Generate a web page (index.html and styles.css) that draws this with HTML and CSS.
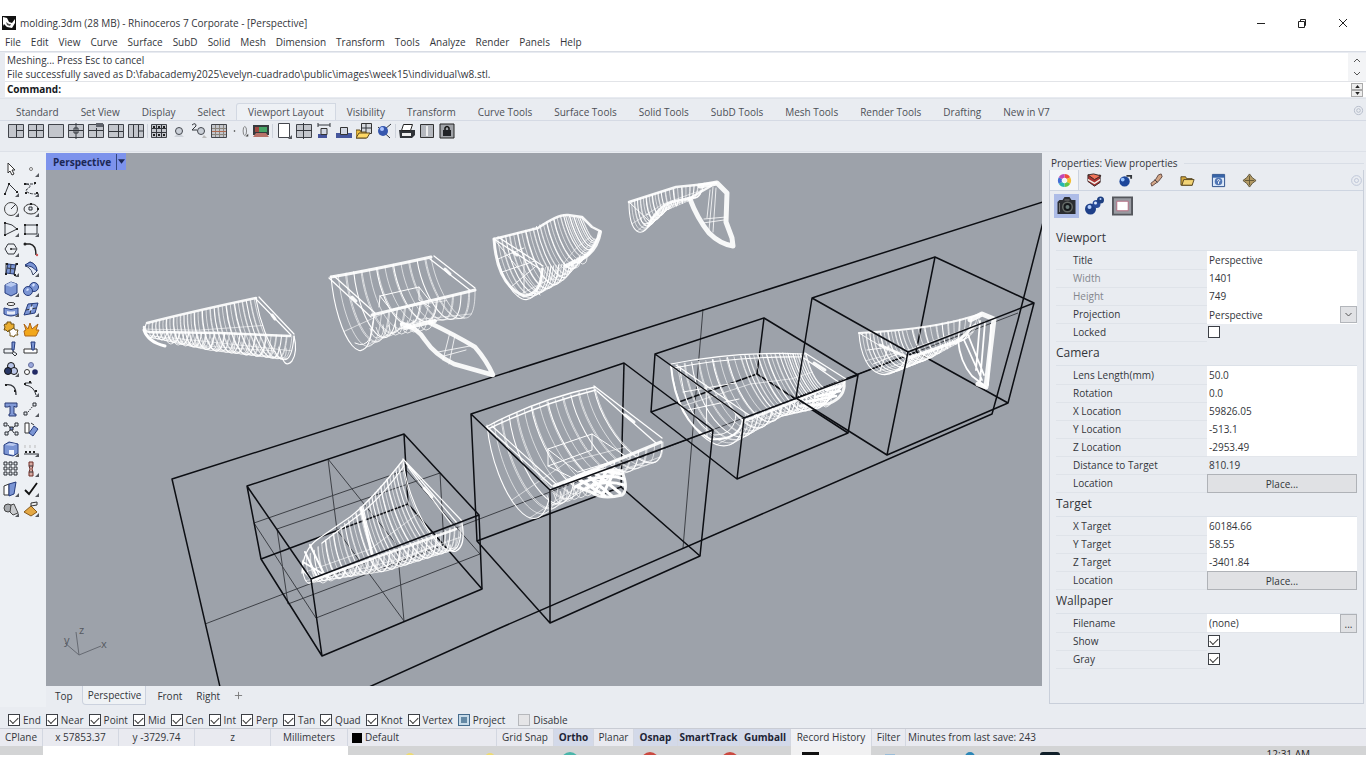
FILE: index.html
```html
<!DOCTYPE html>
<html lang="en">
<head>
<meta charset="utf-8">
<title>molding.3dm - Rhinoceros 7 Corporate</title>
<link rel="stylesheet" href="styles.css">
</head>
<body>
<header class="titlebar">
  <svg class="app-icon" viewBox="0 0 14 14"><path d="M0 0h14v14H0z" fill="#111"/><path d="M1 1l4 1 2 4 3 1 3-4v4l-3 5-5-1-3-3-1 2z" fill="#fff"/><path d="M4 6l3 2 2 0-1 2-3-1z" fill="#555"/></svg>
  <h1 class="doc-title">molding.3dm (28 MB) - Rhinoceros 7 Corporate - [Perspective]</h1>
  <div class="win-buttons">
    <button aria-label="Minimize"><svg viewBox="0 0 10 10"><path d="M1 5.5h8"/></svg></button>
    <button aria-label="Restore"><svg viewBox="0 0 10 10"><path d="M1.500 3.500h6v6h-6zM3.500 3V1.500h5v6H8"/></svg></button>
    <button aria-label="Close"><svg viewBox="0 0 10 10"><path d="M1 1l8 8M9 1l-8 8"/></svg></button>
  </div>
</header>
<nav class="menu" aria-label="Main menu">
  <a href="#">File</a><a href="#">Edit</a><a href="#">View</a><a href="#">Curve</a><a href="#">Surface</a><a href="#">SubD</a><a href="#">Solid</a><a href="#">Mesh</a><a href="#">Dimension</a><a href="#">Transform</a><a href="#">Tools</a><a href="#">Analyze</a><a href="#">Render</a><a href="#">Panels</a><a href="#">Help</a>
</nav>
<section class="command">
  <div class="history">
    <div class="history-text"><p>Meshing... Press Esc to cancel</p><p>File successfully saved as D:\fabacademy2025\evelyn-cuadrado\public\images\week15\individual\w8.stl.</p></div>
    <div class="scroller"><svg viewBox="0 0 8 5"><path d="M1 4l3-3 3 3"/></svg><svg viewBox="0 0 8 5"><path d="M1 1l3 3 3-3"/></svg></div>
  </div>
  <div class="prompt">
    <label for="cmd">Command:</label><input id="cmd" type="text">
    <div class="spinner"><button aria-label="Previous"><svg viewBox="0 0 6 4"><path d="M0 4l3-4 3 4z"/></svg></button><button aria-label="Next"><svg viewBox="0 0 6 4"><path d="M0 0l3 4 3-4z"/></svg></button></div>
  </div>
</section>
<nav class="tabs" aria-label="Toolbar groups">
  <button>Standard</button><button>Set View</button><button>Display</button><button>Select</button><button class="active">Viewport Layout</button><button>Visibility</button><button>Transform</button><button>Curve Tools</button><button>Surface Tools</button><button>Solid Tools</button><button>SubD Tools</button><button>Mesh Tools</button><button>Render Tools</button><button>Drafting</button><button>New in V7</button>
  <svg class="gear" viewBox="0 0 12 12"><circle cx="6" cy="6" r="4.500"/><circle cx="6" cy="6" r="2"/></svg>
</nav>
<div class="toolbar" id="toolbar"></div>

<main class="main">
  <aside class="palette" id="palette"></aside>
  <div class="workspace">
    <div class="viewport">
      <svg class="scene" id="scene" viewBox="46 153 996 533" preserveAspectRatio="xMidYMid slice" role="img" aria-label="Wireframe models in mold boxes">
        <g id="grid" class="thin"></g>
        <g id="boxes" class="edges"></g>
        <g id="models" class="mesh"></g>
        <g id="front" class="edges"></g>
        <g class="axes"><path d="M79 655L76 632M79 655L65 643M79 655L101 646"/><text x="79" y="634">z</text><text x="64" y="644">y</text><text x="101" y="648">x</text></g>
      </svg>
      <button class="view-title"><span>Perspective</span><svg viewBox="0 0 8 5"><path d="M0 0l4 5 4-5z"/></svg></button>
    </div>
    <nav class="view-tabs" aria-label="Viewports"><button>Top</button><button class="active">Perspective</button><button>Front</button><button>Right</button><button aria-label="Add viewport"><svg viewBox="0 0 10 10"><path d="M5 1v8M1 5h8"/></svg></button></nav>
  </div>
  <section class="panel">
    <h2 class="panel-title"><span>Properties: View properties</span></h2>
    <div class="panel-body">
      <div class="panel-tabs" id="panelTabs"></div>
      <div class="subtabs">
        <button class="active" aria-label="Camera"><svg viewBox="0 0 20 20"><path d="M1 6l2-2h3l2-3h5l2 3h4v14H1z" fill="#2b2d31"/><circle cx="11" cy="11" r="5.500" fill="#656a66"/><circle cx="11" cy="11" r="4" fill="#15181b"/><circle cx="11" cy="11" r="2" fill="#677875"/><path d="M3 7v9M8 4h5" stroke="#777"/></svg></button>
        <button aria-label="Material"><svg viewBox="0 0 20 20"><circle cx="6" cy="13" r="5.500" fill="#1e3f88"/><circle cx="12" cy="8" r="4" fill="#284b99"/><circle cx="16" cy="4" r="3.500" fill="#1e3f80"/><circle cx="5" cy="11" r="2" fill="#b4cfff"/><circle cx="11" cy="7" r="1.500" fill="#dce9ff"/><circle cx="16" cy="3" r="1" fill="#b4cfff"/></svg></button>
        <button aria-label="Safe frame"><svg viewBox="0 0 22 20"><path d="M1 1h20v18H1z" fill="#999ba2" stroke="#55575d" stroke-width="2"/><path d="M5 5h12v10H5z" fill="#fff" stroke="#b36b80"/></svg></button>
      </div>
      <form class="props">
        <h3>Viewport</h3>
        <div class="row"><label for="p1">Title</label><input id="p1" type="text" value="Perspective"></div>
        <div class="row dim"><label for="p2">Width</label><input id="p2" type="text" value="1401"></div>
        <div class="row dim"><label for="p3">Height</label><input id="p3" type="text" value="749"></div>
        <div class="row"><label for="p4">Projection</label><div class="pick"><select id="p4"><option>Perspective</option></select><svg viewBox="0 0 8 5"><path d="M1 1l3 3 3-3"/></svg></div></div>
        <div class="row"><label for="p5">Locked</label><input id="p5" type="checkbox"></div>
        <h3>Camera</h3>
        <div class="row"><label for="c1">Lens Length(mm)</label><input id="c1" type="text" value="50.0"></div>
        <div class="row"><label for="c2">Rotation</label><input id="c2" type="text" value="0.0"></div>
        <div class="row"><label for="c3">X Location</label><input id="c3" type="text" value="59826.05"></div>
        <div class="row"><label for="c4">Y Location</label><input id="c4" type="text" value="-513.1"></div>
        <div class="row"><label for="c5">Z Location</label><input id="c5" type="text" value="-2953.49"></div>
        <div class="row"><label for="c6">Distance to Target</label><output id="c6">810.19</output></div>
        <div class="row"><label for="c7">Location</label><button id="c7" type="button">Place...</button></div>
        <h3>Target</h3>
        <div class="row"><label for="t1">X Target</label><input id="t1" type="text" value="60184.66"></div>
        <div class="row"><label for="t2">Y Target</label><input id="t2" type="text" value="58.55"></div>
        <div class="row"><label for="t3">Z Target</label><input id="t3" type="text" value="-3401.84"></div>
        <div class="row"><label for="t4">Location</label><button id="t4" type="button">Place...</button></div>
        <h3>Wallpaper</h3>
        <div class="row"><label for="w1">Filename</label><div class="pick"><input id="w1" type="text" value="(none)"><button type="button" aria-label="Browse">...</button></div></div>
        <div class="row"><label for="w2">Show</label><input id="w2" type="checkbox" checked></div>
        <div class="row"><label for="w3">Gray</label><input id="w3" type="checkbox" checked></div>
      </form>
    </div>
  </section>
</main>

<div class="osnap">
  <label><input type="checkbox" checked>End</label><label><input type="checkbox" checked>Near</label><label><input type="checkbox" checked>Point</label><label><input type="checkbox" checked>Mid</label><label><input type="checkbox" checked>Cen</label><label><input type="checkbox" checked>Int</label><label><input type="checkbox" checked>Perp</label><label><input type="checkbox" checked>Tan</label><label><input type="checkbox" checked>Quad</label><label><input type="checkbox" checked>Knot</label><label><input type="checkbox" checked>Vertex</label><label><input type="checkbox" class="mixed">Project</label><label class="last"><input type="checkbox" class="off">Disable</label>
</div>
<div class="status">
  <button class="cplane">CPlane</button><span class="coord">x 57853.37</span><span class="coord">y -3729.74</span><span class="coord">z</span><span class="coord units">Millimeters</span><button class="layer"><i></i>Default</button><button class="snap">Grid Snap</button><button class="on">Ortho</button><button>Planar</button><button class="on osn">Osnap</button><button class="on smart">SmartTrack</button><button class="on gum">Gumball</button><button class="rec">Record History</button><button class="filter">Filter</button><span class="save">Minutes from last save: 243</span>
</div>
<footer class="taskbar">
  <div class="start"></div><div class="search"></div>
  <div class="apps"><i class="yellow"></i><i class="yellow"></i><i class="teal"></i><i class="red"></i><i class="red"></i><i class="rhino"></i><i class="pale"></i><i class="blue"></i><i class="dark"></i></div>
  <time>12:31 AM</time>
</footer>
<script src="app.js"></script>
</body>
</html>
```
FILE: styles.css
```css
* { box-sizing: border-box; }
body { margin: 0; min-height: 100vh; padding: 12px 0 13px; display: flex; flex-direction: column; background: #fff; color: #33353a; font: 10px/14px "Open Sans", "Noto Sans", sans-serif; }
button, input, select { font: inherit; color: inherit; }
button { background: none; border: 0; padding: 0; }
h1, h2, h3, p { margin: 0; font-weight: 400; }
svg { display: block; }

.titlebar { display: flex; align-items: center; height: 22px; padding: 0 0 0 2px; gap: 4px; }
.app-icon { width: 14px; height: 14px; }
.doc-title { font-size: 10px; line-height: 22px; flex: 1; }
.win-buttons { display: flex; padding-right: 3px; }
.win-buttons button { width: 41px; display: flex; justify-content: center; }
.win-buttons svg { width: 10px; height: 10px; fill: none; stroke: #222; }

.menu { display: flex; gap: 10px; height: 17px; padding: 0 5px; }
.menu a { color: inherit; text-decoration: none; line-height: 17px; }

.command { background: #e8ebf1; padding: 1px 0 1px 5px; border-top: 1px solid #d8dce4; border-bottom: 1px solid #dfe3e9; }
.history, .prompt { background: #fff; display: flex; }
.history-text { flex: 1; padding-left: 2px; white-space: nowrap; overflow: hidden; }
.scroller { width: 18px; padding: 5px; display: flex; flex-direction: column; justify-content: space-between; background: #f3f4f6; }
.scroller svg { width: 8px; height: 5px; fill: none; stroke: #555; }
.prompt { height: 16px; border-top: 1px solid #e2e4e8; padding-left: 2px; align-items: center; }
.prompt label { font-weight: 700; line-height: 14px; height: 15px; color: #15171b; }
.prompt input { flex: 1; min-width: 0; border: 0; outline: 0; background: none; height: 14px; }
.spinner { width: 14px; margin-right: 1px; }
.spinner button { display: flex; width: 12px; height: 7px; align-items: center; justify-content: center; background: #eee; border: 1px solid #aaa; }
.spinner svg { width: 5px; height: 3px; fill: #222; }

.tabs { display: flex; align-items: flex-end; background: #e9ecf1; height: 22px; padding: 0 2px 0 5px; border-bottom: 1px solid #d5dae4; }
.tabs button { height: 17px; padding: 0 11px; color: #4d5057; white-space: nowrap; }
.tabs .active { background: #eef1f5; border: 1px solid #d2d8e2; border-bottom: 0; border-radius: 3px 0 0 0; }
.gear { width: 11px; height: 11px; margin: 0 0 4px auto; fill: none; stroke: #b4bac8; }

.toolbar { display: flex; align-items: center; background: #e9ecf1; height: 31px; padding: 0 6px 10px; border-bottom: 1px solid #dde1e8; }
.toolbar button { width: 20px; height: 20px; display: flex; align-items: center; justify-content: center; }
.toolbar svg { width: 16px; height: 16px; }
.toolbar .narrow { width: 11px; }
.toolbar .sep { width: 1px; height: 14px; background: #cdd2db; margin: 0 1px; }

.main { flex: 1; min-height: 0; display: flex; background: #e9ecf1; }
.palette { width: 46px; flex: none; display: grid; grid-template-columns: 20px 20px; grid-auto-rows: 20px; padding: 7px 0 0 1px; background: #edf0f4; }
.palette button { width: 20px; height: 20px; padding: 2px; }
.palette svg { width: 17px; height: 17px; }
.workspace { flex: 1; min-width: 0; display: flex; flex-direction: column; padding-top: 1px; }
.viewport { position: relative; flex: 1; min-height: 0; background: #9da2aa; overflow: hidden; }
.scene { position: absolute; inset: 0; width: 100%; height: 100%; }
.view-title { position: absolute; left: 0; top: 0; display: flex; align-items: center; background: #7d93ec; height: 17px; color: #1b2755; font-weight: 700; }
.view-title span { padding: 0 5px 0 7px; line-height: 16px; border-right: 1px solid #34467f; }
.view-title svg { width: 7px; height: 5px; margin: 0 1px; fill: #1b2755; }
.thin { fill: none; stroke: #16181d; stroke-width: 1; opacity: .7; }
.edges { fill: none; stroke: #0c0e13; stroke-width: 1.500; stroke-linejoin: round; }
.mesh { fill: none; stroke: #fff; stroke-linejoin: round; stroke-linecap: round; }
.axes { fill: none; stroke: #666a72; }
.axes text { fill: #555960; stroke: none; font-size: 11px; }
.view-tabs { display: flex; height: 21px; padding: 0 0 2px 2px; }
.view-tabs button { padding: 0 7px; }
.view-tabs .active { padding: 0 4px 0 5px; margin: 0 4px 0 2px; background: #eff2f5; border: 1px solid #ccd2de; border-top: 0; border-radius: 0 0 0 4px; }
.view-tabs svg { width: 9px; height: 9px; fill: none; stroke: #777; }

.panel { width: 324px; flex: none; padding: 4px 2px 3px 7px; display: flex; flex-direction: column; }
.panel-title { font-size: 10px; line-height: 14px; display: flex; align-items: center; gap: 6px; padding-left: 2px; }
.panel-title::after { content: ""; flex: 1; height: 1px; background: #d9dee6; }
.panel-body { flex: 1; min-height: 0; border: 1px solid #c9cfda; border-top: 0; padding-bottom: 35px; display: flex; flex-direction: column; }
.panel-tabs { display: flex; height: 21px; border-bottom: 1px solid #ced5e1; }
.panel-tabs button { width: 31px; display: flex; justify-content: center; align-items: center; }
.panel-tabs button:first-child { width: 29px; background: #f3f5f8; border-right: 1px solid #ccd3df; }
.panel-tabs svg { width: 15px; height: 15px; }
.panel-tabs button:last-child { width: 13px; margin-left: auto; }
.subtabs { display: flex; gap: 3px; padding: 3px 0 8px 4px; }
.subtabs button { width: 25px; height: 24px; display: grid; place-items: center; }
.subtabs svg { width: 21px; height: 20px; }
.subtabs .active { background: #adbce7; }
.props { flex: 1; display: flex; flex-direction: column; padding: 0 6px; }
.props h3 { flex: 45 1 0; font-size: 12px; line-height: 24px; border-bottom: 1px solid #dce1e8; }
.row { flex: 37 1 0; min-height: 0; display: grid; grid-template-columns: 151px 1fr; align-items: stretch; }
.row > label { padding-left: 17px; line-height: 18px; border-bottom: 1px solid #dfe3e9; }
.dim > label { color: #83868d; }
.row input[type="text"] { width: 100%; min-width: 0; height: 100%; border: 0; border-bottom: 1px solid #e3e6eb; background: #fff; padding: 0 2px; }
.row output { padding-left: 2px; line-height: 18px; }
.row button { background: #e0e1e4; border: 1px solid #afb2b7; line-height: 14px; }
.pick { display: flex; position: relative; min-height: 0; }
.pick select { width: 100%; appearance: none; border: 0; background: #fff; padding: 0 2px; }
.pick svg { position: absolute; right: 0; top: 1px; width: 17px; height: 17px; background: #e1e2e5; border: 1px solid #b3b6bb; fill: none; stroke: #555; padding: 5px 3px; }
.pick button { width: 17px; flex: none; line-height: 8px; }
input[type="checkbox"] { appearance: none; width: 12px; height: 12px; margin: 0; border: 1px solid #3c3f45; background: #fff; flex: none; }
.row input[type="checkbox"] { margin: 3px 0 0 1px; }
input[type="checkbox"]:checked::after { content: ""; display: block; width: 7px; height: 4px; margin: 2px 0 0 1px; border: solid #333; border-width: 0 0 1px 1px; transform: rotate(-45deg); }
input.mixed { border-color: #456b8c; background: #6489a5; box-shadow: inset 0 0 0 2px #c7dbe9; }
input.off { border-color: #b6b8bc; background: #e5e5e7; }

.osnap { display: flex; gap: 5px; height: 22px; padding: 5px 8px 0; background: #e9ecf1; border-bottom: 1px solid #c9ccd4; }
.osnap label { display: flex; align-items: center; gap: 3px; }
.osnap .last { margin-left: 8px; }
.status { display: flex; height: 17px; background: #e9eaf0; white-space: nowrap; }
.status > * { width: 40px; line-height: 17px; text-align: center; border-right: 1px solid #d3d7e1; flex: none; }
.status .cplane { width: 43px; }
.status .coord { width: 76px; }
.status .units { width: 77px; }
.status .layer { width: 149px; display: flex; align-items: center; gap: 3px; padding-left: 4px; }
.layer i { width: 10px; height: 10px; background: #000; }
.status .snap { width: 57px; }
.status .on { font-weight: 700; background: #d3d9e9; color: #1d2435; }
.status .osn { width: 44px; }
.status .smart { width: 62px; }
.status .gum { width: 51px; }
.status .rec { width: 81px; background: #f0f1f5; }
.status .filter { width: 34px; }
.status .save { width: auto; border: 0; padding-left: 2px; }
.taskbar { height: 9px; overflow: hidden; display: flex; background: #d3d4d5; flex: none; }
.start { width: 43px; }
.search { width: 305px; background: #fff; }
.apps { display: grid; grid-template-columns: repeat(9, 80px); padding-left: 22px; justify-items: center; }
.apps i { width: 18px; height: 18px; margin-top: 6px; border-radius: 9px; }
.apps .yellow { width: 10px; background: #edda72; margin-top: 7px; }
.apps .teal { background: #4bb5aa; }
.apps .red { background: #ca4a40; }
.apps .rhino { width: 80px; height: 9px; margin: 0 0 0 21px; justify-self: start; border-radius: 0; background: linear-gradient(#f1f1f2 6px, transparent 6px), linear-gradient(90deg, transparent 11px, #111 11px, #111 28px, transparent 28px), #f1f1f2; }
.apps .pale { width: 10px; border-radius: 0; background: #9bbdd8; margin-top: 8px; }
.apps .blue { width: 10px; background: #2c86b6; }
.apps .dark { width: 20px; border-radius: 3px; background: #101f29; }
.taskbar time { margin-left: auto; padding-right: 56px; line-height: 16px; color: #222; }
```
FILE: app.js
```js
const button = (label, art, box, cls) =>
  `<button aria-label="${label}"${cls ? ` class="${cls}"` : ''}><svg viewBox="0 0 ${box} ${box}">${art}</svg></button>`;
const line = (d, extra = '') => `<path d="${d}" fill="none" stroke="#33363c" ${extra}/>`;
const fill = (d, c, extra = '') => `<path d="${d}" fill="${c}" ${extra}/>`;
const dot = (x, y, r, c, extra = '') => `<circle cx="${x}" cy="${y}" r="${r}" fill="${c}" ${extra}/>`;
const pane = (d) => `<path d="M.5 1.500h15v13H.5z" fill="#c3c6cc" stroke="#41444a"/>` + line(d);
const corner = fill('M16 12v4h-4z', '#55585e');
const sep = '<span class="sep"></span>';

/* Viewport Layout toolbar */
document.getElementById('toolbar').innerHTML = [
  button('Three viewports', pane('M8.500 2v12M9 7.500h6'), 16),
  button('Four viewports', pane('M8.500 2v12M1 7.500h14'), 16),
  button('Maximize', pane(''), 16),
  button('Split all', pane('M8 0v16M1 7.500h14M6 5h4v5H6z'), 16),
  button('New viewport', pane('M8.500 5v9M1 7.500h14') + fill('M8 0h7v4H8z', '#60646c'), 16),
  button('Split horizontal', pane('M1 8.500h14M10.500 2v12'), 16),
  button('Split vertical', pane('M5.500 2v12M10.500 2v12M11 8h4'), 16), sep,
  button('Grid', pane('M1 5.500h14M1 9.500h14M5.500 2v12M10.500 2v12') + fill('M2 3h2v2H2zM7 3h2v2H7zM12 3h2v2h-2zM2 11h2v2H2zM7 11h2v2H7zM12 11h2v2h-2z', '#222'), 16),
  button('Sphere', fill('M3 14l3-3h4l3 3z', '#cfd3da') + dot(8, 8, 3.5, '#ccd1d9', 'stroke="#44484f"'), 16),
  button('Link views', line('M1 2q4-3 4 1l-4 4h5') + dot(10, 8, 3.5, '#ccd1d9', 'stroke="#44484f"') + fill('M13 12l3 3h-5z', '#bbb'), 16),
  button('Background grid', pane('') + '<path d="M1 5.500h14M1 11.500h14M4.500 2v12M8.500 2v12M12.500 2v12" stroke="#8a857d"/><path d="M1 8.500h14" stroke="#b06a50"/>', 16),
  button('Point', dot(8, 8, 1.2, '#333'), 16, 'narrow'),
  button('Ellipse', '<ellipse cx="7" cy="8" rx="2.500" ry="6.500" fill="none" stroke="#555"/>' + fill('M12 12v4H8z', '#444'), 16, 'narrow'),
  button('Wallpaper', fill('M0 2h16v10H0z', '#373b3e') + fill('M2 4h5v5H2z', '#a04840') + fill('M6 4h8v5H6z', '#46a466') + fill('M0 14l3-4h10l3 4z', '#b77168'), 16), sep,
  button('New layout', '<path d="M2.500.5h11v14h-11z" fill="#fff" stroke="#44474d"/>' + corner, 16),
  button('Detail', pane('M7.500 0v16M0 7.500h16'), 16),
  button('Scale', line('M2 2h12M2 0v4M14 0v4') + fill('M2 11h9v4H2z', '#45549b') + '<path d="M5 5.500h6v6H5z" fill="#d3d8e3" stroke="#333"/>', 16),
  button('Lock detail', fill('M0 10h16v5H0z', '#45569c') + '<path d="M4.500 4.500h7v7h-7z" fill="#d3d8e3" stroke="#333"/>', 16),
  button('Open layout', '<path d="M5.500.5h10v10h-10z" fill="#d5d8dd" stroke="#333"/>' + line('M10 1v9M5 5h10') + fill('M0 7h4l1 2h5v6H0z', '#eebd3c', 'stroke="#604c20"') + fill('M3 10h11l-3 5H0z', '#ffd966', 'stroke="#604c20"'), 16),
  button('Sync', line('M15 1L9 6M14 15L2 4') + dot(7, 8, 5, '#3657ae') + dot(6, 6, 2, '#adc5ff'), 16), sep,
  button('Print', fill('M0 7h16v5l-3 3H1z', '#303338') + '<path d="M4.500 1.500h9l-2 6h-9z" fill="#fff" stroke="#222"/>' + fill('M3 10h9v3H3z', '#eee'), 16),
  button('Preview', '<path d="M1.500 1.500h13v13h-13z" fill="#b5b8be" stroke="#333"/><path d="M7 3h2v10H7z" fill="#eee"/>', 16),
  button('Lock', fill('M1 1h14v14H1z', '#a0a3a8', 'stroke="#222"') + '<path d="M6 7V5q2-3 4 0v2" fill="none" stroke="#111" stroke-width="1.500"/>' + fill('M4 7h8v6H4z', '#202226'), 16)
].join('');

/* Main palette, two icons to a row */
const B = '#7b95d4', D = '#253b7c';
const blue = (d) => fill(d, B, `stroke="${D}"`);
const dots = (list) => list.map(([x, y]) => `<path d="M${x - 1} ${y - 1}h2v2h-2z" fill="#222"/>`).join('');
const squares = (list, c = '#e9edf2') => list.map(([x, y]) => `<path d="M${x} ${y}h3v3h-3z" fill="${c}" stroke="#292c33"/>`).join('');
const palette = [
  ['Select', '<path d="M5 2v10l2-2 2 4 2-1-2-4h3z" fill="#fff" stroke="#333"/>'],
  ['Points', dot(8, 8, 1.5, '#fff', 'stroke="#777"') + corner],
  ['Polyline', line('M2 13L6 3l8 8') + dots([[2, 13], [6, 3], [14, 11]]) + corner],
  ['Control curve', line('M3 3h9M3 3q8 1 0 6 1 4 10 4', 'stroke-dasharray="3 1"') + dots([[2, 3], [12, 2], [3, 12], [14, 12]]) + corner],
  ['Circle', '<circle cx="8" cy="8" r="6.500" fill="none" stroke="#444"/>' + line('M8 8l5-5') + corner],
  ['Ellipse', '<ellipse cx="8" cy="8" rx="7" ry="5" fill="none" stroke="#333"/>' + squares([[6, 6]]) + dots([[8, 3], [15, 8]]) + corner],
  ['Arc', line('M2 2v12L14 8Q10 3 2 2') + dots([[2, 2], [2, 14], [14, 8]]) + corner],
  ['Rectangle', line('M2 4h12v9H2z') + dots([[2, 4], [14, 4], [2, 13]]) + corner],
  ['Polygon', line('M5 3h6l3 5-3 5H5L2 8zM8 8h5') + dot(8, 8, 1, '#222') + corner],
  ['Fillet', '<path d="M2 3h5q6 1 6 11" fill="none" stroke="#222" stroke-width="1.500"/>' + dot(2, 3, 1.5, '#222') + dot(14, 14, 1.2, '#c55')],
  ['Surface', blue('M5 3l8 1-2 9-8-1z') + line('M4 7l8 1M3 2v12M13 2l-2 12M8 3L7 13') + dots([[4, 3], [14, 3], [3, 13], [12, 14]]) + corner],
  ['Loft', '<path d="M2 5l3 1q4 3 5 8l4-4Q13 3 7 1z" fill="#e4eaf8" stroke="#394663"/>' + blue('M2 4l5-3q7 2 7 9-4-5-12-6z') + corner],
  ['Box', blue('M2 4l6-3 6 2v9l-6 3-6-3z') + fill('M2 4l6 2 6-3-6-2z', '#b7c9f0') + corner],
  ['Sphere', dot(11, 6, 4.5, B, `stroke="${D}"`) + dot(5, 10, 4.5, B, `stroke="${D}"`) + fill('M9 4l2-2 1 2-2 2zM3 9l2-2 1 2-2 1z', '#d5e1ff') + corner],
  ['Revolve', blue('M1 7q7 3 14 0v6q-7 4-14 0z') + '<ellipse cx="8" cy="3" rx="4" ry="1.500" fill="#fff" stroke="#333"/><path d="M4 10q4 1 8 0v3q-4 1-8 0z" fill="#e9edf8"/>' + corner],
  ['Plane', blue('M5 3l10-1-3 10-11 2z') + line('M3 9l10-2M9 3L7 13') + fill('M7 6l3-1-1 4-3 1z', '#dce5fa') + corner],
  ['Gear', '<path d="M2 3l2 0 0-2 4 0v2h3v4l-2 1v2l-3-1-1 2-2-2-2 0 1-3-1-2z" fill="#e8ad31" stroke="#6e5015"/><path d="M9 8l2-1 1 2 3 0-1 3 1 2-3 0-1 2-2-1-2 0 0-3-1-2z" fill="#fff" stroke="#725719"/>'],
  ['Explode', '<path d="M1 3l4 5 2-6 2 6 6-5-2 6 3 0-3 6H2L1 10l2-1z" fill="#f2a71b" stroke="#ae661a"/>'],
  ['Trim', line('M1 8h9v4H1zM10 10l4 3-2 2-3-3') + blue('M9 1h3l-1 8H9z')],
  ['Split', '<path d="M1 8h13v4H1z" fill="#fff" stroke="#333"/>' + blue('M8 1h4l-1 8H9z')],
  ['Boolean union', dot(8, 5, 3.5, '#b8c5e8', 'stroke="#111"') + dot(11, 10, 3.5, '#bdc8e9', 'stroke="#111"') + dot(5, 10, 3.5, '#293866', 'stroke="#111"') + corner],
  ['Group', dot(8, 4, 2.5, '#9aa8dc', 'stroke="#67719f"') + dot(4, 11, 2.5, '#fff', 'stroke="#333"') + dot(12, 11, 2.8, '#222a65')],
  ['Edit points', line('M2 4q11-2 11 10', 'stroke-width="1.300"') + dots([[3, 4], [12, 10]])],
  ['Blend', line('M2 2h7M2 4q9 1 11 10') + dots([[2, 3], [7, 1], [13, 10]]) + corner],
  ['Text', '<path d="M2 2h12v4h-2l-1-1v8h2v2H6v-2h1V5L5 6H2z" fill="#8199d6" stroke="#283a74"/>'],
  ['Move', line('M5 11l5-6', 'stroke-dasharray="1.500 1"') + squares([[1, 11], [10, 2]]) + corner],
  ['Copy', squares([[1, 2], [12, 2], [2, 11], [12, 11]]) + line('M5 4l6 8M12 5L5 11') + squares([[7, 6]], '#768dd1')],
  ['Rotate', '<path d="M2 2h4v10H2z" fill="#fff" stroke="#333"/>' + blue('M11 5l4 3-5 7-4-3z') + line('M8 2l3 2')],
  ['Cage', blue('M1 4l5-3 9 2v9l-5 3-9-2z') + fill('M2 4l5-2 7 1-4 2z', '#bccbf0') + fill('M6 9h5v5l-5-1z', '#eff4ff') + corner],
  ['Cut', '<path d="M2 4v3M7 4v3M12 4v3" stroke="#bbb"/>' + line('M1 13h14') + dots([[3, 11], [7, 11], [11, 11]]) + corner],
  ['Array', squares([[1, 1], [6, 1], [11, 1], [1, 6], [6, 6], [11, 6], [1, 11], [6, 11], [11, 11]])],
  ['Align', '<path d="M6 1h4v4L9 8l1 3v4H6v-4l1-3-1-3z" fill="#d6aaa1" stroke="#702f29"/>' + line('M6 5h4M6 11h4') + corner],
  ['Layers', '<path d="M1 5l5-2v11H1z" fill="#fff" stroke="#333"/>' + blue('M6 3l7-2-2 12-5 2z') + corner],
  ['Check', '<path d="M2 9l4 4 8-11" fill="none" stroke="#111" stroke-width="1.800"/>' + corner],
  ['Shapes', dot(5, 7, 4, '#a6a9ad', 'stroke="#444"') + '<path d="M8 4l3-1 4 9-5 2-3-3z" fill="#c9cbce" stroke="#444"/>' + corner],
  ['Pyramid', '<path d="M1 11l7-6 6 6-6 4z" fill="#e4a844" stroke="#85581b"/>' + '<path d="M8 2l6-1v3l-6 1z" fill="#eee" stroke="#333"/>' + corner]
];
document.getElementById('palette').innerHTML = palette.map(([n, a]) => button(n, a, 17)).join('');

/* Panel tabs */
const wheel = ['#ef4c3c', '#f2bd31', '#63c646', '#24b8b3', '#426ed5', '#c246b7']
  .map((c, i) => `<path d="M8 3a5 5 0 0 1 4.330 2.500" fill="none" stroke="${c}" stroke-width="4" transform="rotate(${i * 60} 8 8)"/>`).join('');
document.getElementById('panelTabs').innerHTML = [
  button('Properties', wheel, 16),
  button('Layers', fill('M1 2l7 3 6-3v8l-6 4-7-5z', '#ac3432', 'stroke="#332728"') + fill('M1 2l6-1 8 2-7 4z', '#f0745a', 'stroke="#332728"') + fill('M1 6l7 4 6-4v2l-6 4-7-4z', '#f1eee8'), 16),
  button('Rendering', dot(7, 9, 5.5, '#1d479b') + dot(5, 7, 2, '#98c3ff') + line('M9 3h5v3', 'stroke-width="2"'), 16),
  button('Materials', '<path d="M3 14l-1-3 5-4 3-5 3-1 1 3-4 5z" fill="#d3a687" stroke="#604841"/>' + line('M6 7l3 3'), 16),
  button('Libraries', fill('M1 4h5l1 2h6v7H1z', '#d4a83c', 'stroke="#564420"') + fill('M4 7h11l-2 6H2z', '#f3d476', 'stroke="#564420"'), 16),
  button('Help', '<path d="M1.500 1.500h13v13h-13z" fill="#dce8f8" stroke="#274c88"/><path d="M2 2h12v3H2z" fill="#3764a8"/>' + dot(8, 9, 4, '#5277b5') + '<path d="M6.500 8q1.500-2 3 0l-1.500 1.500v2" fill="none" stroke="#fff"/>', 16),
  button('Named views', '<path d="M8 1l3 4 4 3-4 3-3 4-3-4-4-3 4-3z" fill="#b49b65" stroke="#5b5138"/><path d="M8 3v10M3 8h10" stroke="#635838"/>', 16),
  button('Options', '<circle cx="8" cy="8" r="6" fill="none" stroke="#b6bfd3"/><circle cx="8" cy="8" r="2.500" fill="none" stroke="#b6bfd3"/>', 16)
].join('');

/* Scene */
const poly = (d, w, o = 1) => `<path d="${d}"${w ? ` stroke-width="${w}"` : ''}${o < 1 ? ` opacity="${o}"` : ''}/>`;
const put = (id, list) => { document.getElementById(id).innerHTML = list.join(''); };

put('grid', [
  'M205 624L1018 313', 'M703 309L683 548',
  'M328 459L397 545L404 621L337 530z', 'M254 523L406 470L480 554L316 618z', 'M277 529L440 473L444 545L288 604z'
].map((d) => poly(d)));

put('boxes', [
  'M220 687L172 479L1043 202', 'M369 687L500 628L992 414L1018 320L1043 222',
  'M261 559L408 504L482 589', 'M404 434L408 504',
  'M477 541L621 487L700 556', 'M624 363L621 487',
  'M651 412L757 374L848 433', 'M764 318L757 374',
  'M796 398L916 352L1008 403', 'M935 257L916 352'
].map((d) => poly(d)));

put('front', [
  'M247 486L404 434L479 515L311 579zM247 486L261 559L322 656L482 589L479 515M311 579L322 656',
  'M471 414L624 363L713 430L550 490zM471 414L477 541L550 623L700 556L713 430M550 490L550 623',
  'M655 354L764 318L858 375L744 418zM655 354L651 412L737 479L848 433L858 375M744 418L737 479',
  'M812 298L935 257L1034 303L908 352zM812 298L796 398L887 455L1008 403L1034 303M908 352L887 455'
].map((d) => poly(d)));

/* A shell is a run of cubic sections [x0,y0, x1,y1, x2,y2, x3,y3]; ribs and
   lengthwise strands are interpolated between neighbouring sections. */
const mix = (a, b, t) => a.map((v, i) => v + (b[i] - v) * t);
function sectionAt(keys, u) {
  const s = Math.min(u * (keys.length - 1), keys.length - 1.0001), i = Math.floor(s);
  return mix(keys[i], keys[i + 1], s - i);
}
function pointAt(k, t) {
  const m = 1 - t, w = [m * m * m, 3 * m * m * t, 3 * m * t * t, t * t * t];
  return [0, 1].map((a) => w.reduce((sum, f, i) => sum + f * k[i * 2 + a], 0).toFixed(1)).join(' ');
}
function shell(keys, ribs, strands, gap = 0.4) {
  const out = [];
  for (let i = 0; i <= ribs; i++) {
    const u = Math.min(1, (i + (i % 3) * gap) / ribs);
    const k = sectionAt(keys, u).map((v) => v.toFixed(1));
    out.push(poly(`M${k[0]} ${k[1]}C${k.slice(2).join(' ')}`, i % 4 ? 0.8 : 1.1, i % 4 ? 0.8 : 1));
  }
  strands.forEach((t) => {
    const pts = [];
    for (let i = 0; i <= 24; i++) pts.push(pointAt(sectionAt(keys, i / 24), t));
    out.push(poly('M' + pts.join('L'), 0.8, 0.75));
  });
  return out.join('');
}
/* Scalloped lower edge where neighbouring ribs overlap */
function scallops(x0, y0, x1, y1, n, r) {
  let out = '';
  for (let i = 0; i < n; i++) {
    const x = x0 + (x1 - x0) * i / (n - 1), y = y0 + (y1 - y0) * i / (n - 1);
    out += `M${(x - r).toFixed(1)} ${(y - r * 1.6).toFixed(1)}q${r * 0.6} ${r * 2.2} ${r * 1.7} ${r * 1.4}q${r * 0.7} ${-r * 0.5} ${r * 0.5} ${-r * 2}`;
  }
  return poly(out, 0.9, 0.85);
}
const rim = (d, w = 3) => poly(d, w, 0.92);

put('models', [
  shell([[146, 324, 143, 332, 150, 344, 154, 333], [197, 312, 196, 345, 214, 368, 218, 332], [256, 299, 264, 345, 290, 388, 294, 336]], 44, [0.2, 0.45, 0.6, 0.75, 0.88]),
  rim('M147 323Q190 312 256 298', 2.5), poly('M255 298L291 335M259 297L294 334', 1.2), rim('M272 315L275 319'), rim('M144 327Q144 333 154 332L220 333L290 336', 2.5),
  poly('M144 330Q148 342 165 346', 3), scallops(170, 344, 280, 359, 16, 5), poly('M294 336Q298 352 292 361Q284 370 280 350', 1.2),

  shell([[331, 276, 336, 338, 368, 386, 374, 316], [380, 267, 387, 315, 420, 345, 424, 302], [431, 257, 438, 302, 476, 350, 475, 290]], 19, [0.35, 0.65, 0.8]),
  rim('M331 277Q372 270 431 257', 3), rim('M372 315L475 290', 3), poly('M329 278L371 317M334 276L375 313M430 259L471 291M434 256L475 288', 1.3), rim('M352 297L356 301'), rim('M445 269L450 274'),
  poly('M380 296L419 287L430 301M380 296L391 310L430 300M380 296L379 307M419 287V300L430 307', 1), scallops(376, 338, 425, 330, 9, 6),
  poly('M374 316L370 338Q365 348 355 343', 1),
  rim('M402 324Q418 328 425 340Q435 355 454 364L493 375Q487 361 475 347Q455 335 430 323', 4.500), poly('M450 332L443 360M455 335L449 364M438 352L470 346M444 356L466 350', 0.8), rim('M405 328L435 321', 4),

  shell([[494, 239, 499, 290, 535, 330, 543, 268], [531, 229, 540, 272, 565, 305, 568, 263], [563, 215, 568, 238, 584, 268, 592, 250], [582, 218, 588, 232, 594, 248, 600, 234]], 42, [0.5, 0.65, 0.8, 0.9]),
  rim('M494 239L538 228Q558 214 568 215L582 217L592 227L600 231', 2.5), rim('M600 232Q597 250 583 258L566 266', 4), rim('M494 239Q497 285 524 296Q542 294 542 269', 3), poly('M494 239L540 269M498 237L543 266', 1.3), rim('M513 252L517 255'),
  poly('M494 239L540 295M502 272L535 261M498 259L524 248M524 296V254M511 287L535 267', 0.9), scallops(553, 280, 582, 264, 5, 4),

  shell([[629, 202, 629, 232, 642, 245, 654, 216], [660, 192, 662, 208, 667, 218, 672, 201], [704, 183, 703, 190, 699, 201, 692, 197]], 32, [0.3, 0.5, 0.7, 0.9]),
  rim('M629 202L676 187L716 183', 2.5), rim('M648 226Q658 206 672 202L690 198L711 186', 2.5), rim('M690 199Q697 218 709 233Q720 244 733 246L732 238L726 222L727 193L717 183L700 186', 5), poly('M710 190L707 218M713 187L709 230M704 219L726 217M716 188L713 232M703 223L724 220', 0.8),
  poly('M629 202L650 222M641 218a5 5 0 1 0 6-4', 1),

  shell([[303, 560, 301, 575, 307, 590, 313, 580], [359, 511, 368, 560, 390, 594, 394, 552], [403, 461, 410, 520, 462, 590, 461, 524]], 44, [0.3, 0.55, 0.7, 0.82, 0.92]),
  poly('M403 460Q372 500 350 517L318 539Q303 549 302 573M404 466Q380 500 355 518L322 543', 1.3), poly('M403 459L462 521M406 463L457 523M408 467L452 525', 1.2), rim('M424 488L432 497'), rim('M304 571L313 580L456 529', 2.5), poly('M361 508L372 554', 3), poly('M305 552L318 579M303 562L330 578M310 545L325 576', 2),
  poly('M462 523Q466 546 456 551Q449 553 450 545', 1.3), scallops(322, 583, 450, 549, 17, 5),

  shell([[487, 425, 494, 495, 542, 558, 551, 488], [540, 404, 548, 448, 598, 520, 607, 463], [595, 388, 606, 442, 665, 492, 663, 442]], 21, [0.42, 0.64, 0.76, 0.87]),
  poly('M486 427Q536 400 595 387M488 429Q540 404 596 390', 1.4), poly('M594 386L662 438M597 391L656 443', 1.3), rim('M625 415L634 422'), rim('M554 486L661 442', 3), poly('M487 427L552 486M492 426L556 484', 1.2), scallops(553, 505, 600, 492, 8, 6),
  poly('M548 449L592 434L627 457L578 472zM548 449V466L585 484M592 434V450L548 466', 1),
  rim('M565 483Q590 466 622 471Q629 490 622 495Q603 500 593 493L578 487', 3), poly('M570 483Q600 466 621 474M575 487Q602 471 624 479M583 490Q604 478 624 485M595 473L620 493M588 476L612 496M606 472L594 494M580 480L605 496M614 472L602 496', 3),

  shell([[671, 365, 677, 436, 737, 474, 744, 421], [740, 356, 752, 402, 784, 436, 790, 404], [782, 353, 793, 394, 825, 432, 830, 388], [806, 354, 813, 384, 833, 405, 845, 382]], 44, [0.22, 0.6, 0.74, 0.86]),
  poly('M671 364Q735 351 805 354M674 368Q735 356 803 357', 1.2), poly('M805 353L846 379M801 356L840 383', 1.3), rim('M814 363L825 370'), poly('M671 366L744 418M676 365L749 415', 1.2), rim('M744 421L788 404L845 380', 2.5), rim('M844 382Q846 397 828 404L800 406', 3), poly('M826 390L840 386M815 397L840 391M805 402L836 396', 2.5), poly('M671 366Q676 420 710 439Q739 441 743 420', 2),
  poly('M680 366Q683 415 714 435Q735 435 736 414M683 392L735 383M688 410L739 399M706 385L707 437', 1), scallops(750, 422, 825, 407, 10, 5),

  shell([[859, 333, 862, 380, 893, 386, 907, 357], [905, 331, 911, 360, 930, 370, 937, 347], [980, 315, 977, 328, 969, 344, 958, 338]], 38, [0.25, 0.45, 0.6, 0.75, 0.88]),
  rim('M859 333Q920 330 960 320L981 314', 2), rim('M880 345L909 358L958 341L975 325', 3), rim('M970 320L982 314L994 319L990 352L986 387L978 384', 5), poly('M958 340Q960 362 972 376L986 387M964 340L982 380M968 335L984 375M985 322L980 382M980 321L976 370M991 325L988 385', 1.800),
  poly('M859 333L887 350M867 350L890 347M873 364L898 354M880 371L889 345', 0.9)
]);
```
